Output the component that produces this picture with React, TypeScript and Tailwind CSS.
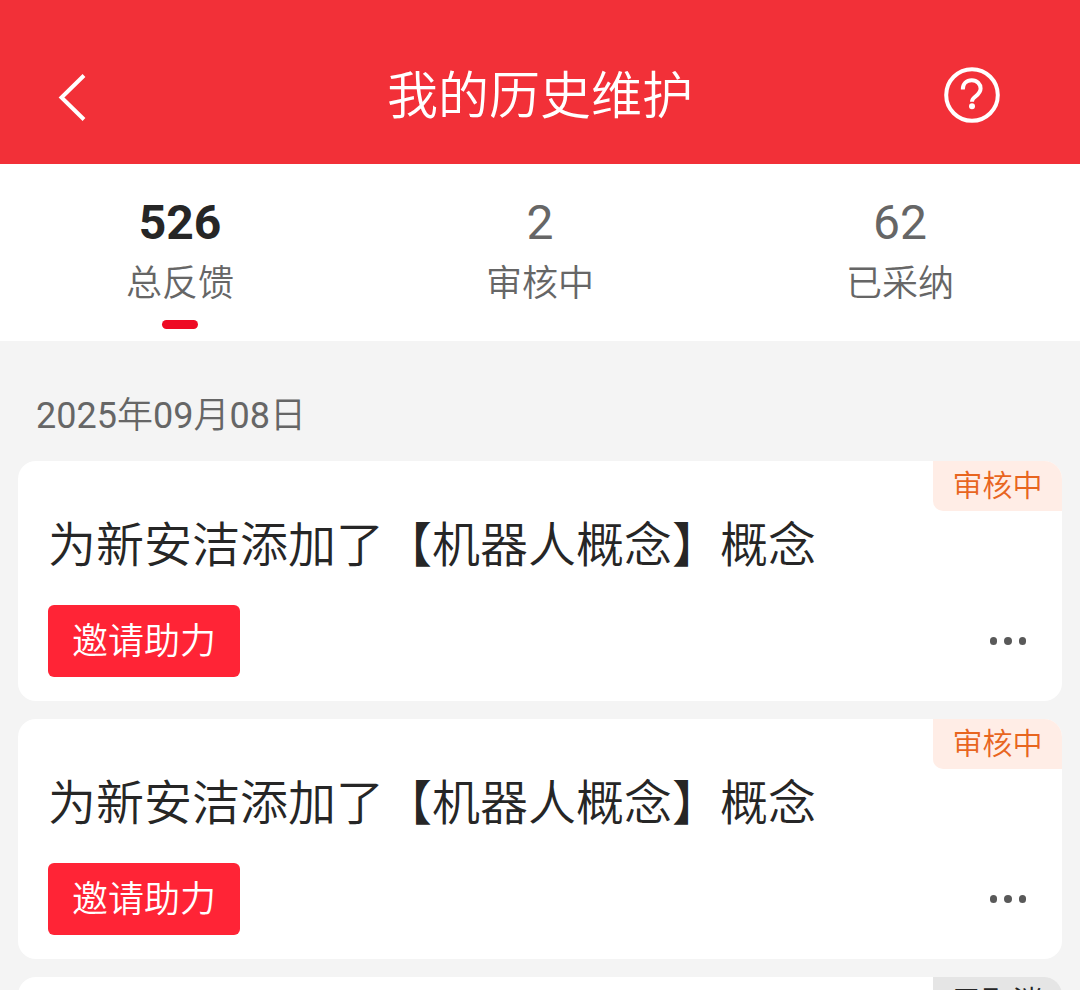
import React, { useState } from "react";

const stats = [
  { label: "总反馈", value: 526 },
  { label: "审核中", value: 2 },
  { label: "已采纳", value: 62 },
];

const records = [
  { id: 1, title: "为新安洁添加了【机器人概念】概念", status: "审核中", pending: true },
  { id: 2, title: "为新安洁添加了【机器人概念】概念", status: "审核中", pending: true },
  { id: 3, title: "", status: "已取消", pending: false },
];

function Header() {
  return (
    <header className="flex h-[164px] items-end justify-between bg-[#f23038] pr-[80px] pb-[38px] pl-[57px] text-white">
      <button className="flex h-[62px] w-[83px] items-center" aria-label="返回">
        <svg width="30" height="54" viewBox="0 0 30 54" fill="none" stroke="currentColor" strokeWidth="4">
          <path d="M27 7.500L4.500 29.500L27 51.500" />
        </svg>
      </button>
      <h1 className="h-[62px] text-[51px] leading-[66px] font-[350]">我的历史维护</h1>
      <button className="flex h-[62px] w-[60px] items-center justify-end" aria-label="帮助">
        <svg className="shrink-0" width="60" height="60" viewBox="0 0 60 60" fill="none" stroke="currentColor">
          <circle cx="32" cy="30" r="25.800" strokeWidth="4" />
          <path d="M22.800 24.500C22.800 18.500 26.500 15.300 31.800 15.300S40.600 19 40.600 23.500C40.600 27 38.500 29 35.500 31.500C33 33.500 32 34 32 36.800" strokeWidth="4" />
          <circle cx="32" cy="41.200" r="3" fill="currentColor" stroke="none" />
        </svg>
      </button>
    </header>
  );
}

export default function App() {
  const [active, setActive] = useState(0);

  return (
    <div className="h-[990px] overflow-hidden bg-[#f4f4f4] font-[Roboto,'Noto_Sans_CJK_SC',sans-serif]">
      <Header />

      <nav className="grid h-[177px] grid-cols-3 bg-white">
        {stats.map((item, i) => (
          <button
            key={item.label}
            onClick={() => setActive(i)}
            className="flex flex-col items-center pt-[30px]"
          >
            <span
              className={
                i === active
                  ? "h-[58px] text-[48px] leading-[58px] font-bold text-[#262626]"
                  : "h-[58px] text-[48px] leading-[58px] text-[#666666]"
              }
            >
              {item.value}
            </span>
            <span className="h-[60px] text-[36px] leading-[64px] font-[350] text-[#666666]">{item.label}</span>
            {i === active && <span className="mt-[8px] h-[9px] w-[36px] rounded-full bg-[#ee0a24]" />}
          </button>
        ))}
      </nav>

      <main className="px-[18px]">
        <h2 className="h-[120px] px-[18px] pt-[50px] text-[36px] leading-[50px] text-[#666666]">
          2025<span className="font-[350]">年</span>09<span className="font-[350]">月</span>08<span className="font-[350]">日</span>
        </h2>

        <div className="flex flex-col gap-[18px]">
          {records.map((record) => (
            <article key={record.id} className="flex h-[240px] flex-col overflow-hidden rounded-[18px] bg-white">
              <div className="flex h-[50px] shrink-0 justify-end">
                <span
                  className={
                    record.pending
                      ? "h-[50px] w-[129px] rounded-bl-[10px] bg-[#ffede6] text-center text-[30px] leading-[49px] font-[350] text-[#e8651f]"
                      : "h-[50px] w-[129px] rounded-bl-[10px] bg-[#e5e5e5] text-center text-[30px] leading-[49px] font-[350] text-[#262626]"
                  }
                >
                  {record.status}
                </span>
              </div>
              {record.title && (
                <>
                  <h3 className="h-[94px] shrink-0 px-[30px] text-[48px] leading-[70px] font-[350] text-[#262626]">
                    {record.title}
                  </h3>
                  <div className="flex items-center justify-between px-[30px]">
                    <button className="h-[72px] w-[192px] rounded-[6px] bg-[#ff2436] text-[36px] leading-[74px] font-[350] text-white">
                      邀请助力
                    </button>
                    <button className="flex gap-[7px] pr-[6px]" aria-label="更多">
                      <span className="size-[7.500px] rounded-full bg-[#595959]" />
                      <span className="size-[7.500px] rounded-full bg-[#595959]" />
                      <span className="size-[7.500px] rounded-full bg-[#595959]" />
                    </button>
                  </div>
                </>
              )}
            </article>
          ))}
        </div>
      </main>
    </div>
  );
}
